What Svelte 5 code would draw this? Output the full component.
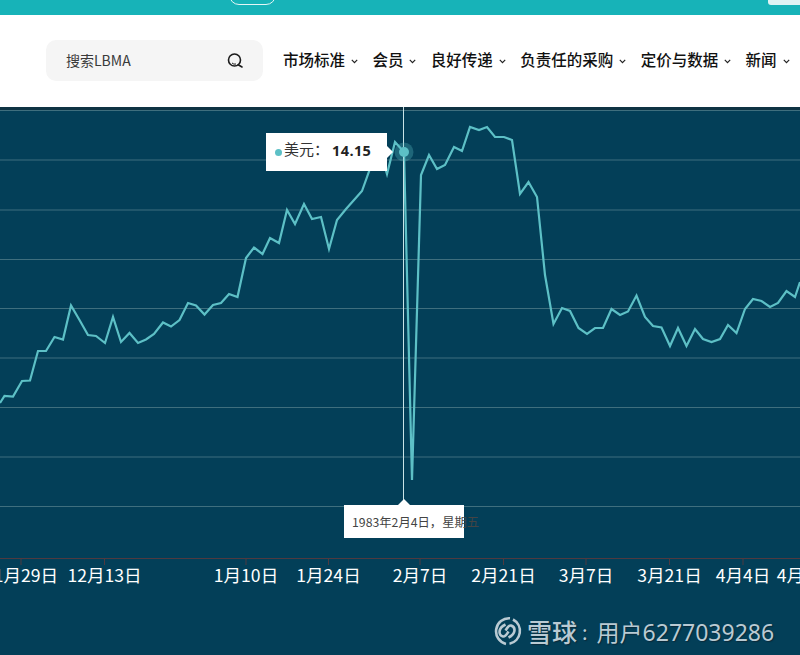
<script>
	// chart samples, read off the reference
	const points = [
		[0, 403], [4.5, 396], [13, 396.5], [22, 381], [30, 380.5], [38, 351], [46, 351], [54.5, 337], [63, 339.5],
		[71, 305.5], [79.5, 320], [88, 335], [96, 336], [105, 343], [113, 317], [121, 342], [129.5, 333], [138, 343],
		[146, 339.5], [154, 334], [163, 322.5], [171, 326.5], [179.5, 320], [188, 303], [196, 305.5], [204.5, 314.5],
		[213, 305], [221, 303], [229, 294], [237.5, 297], [246, 258], [254, 247.5], [262.5, 254], [270, 238],
		[279, 243], [287, 210], [295, 224], [304, 204], [312, 219], [321, 217], [329, 249], [337, 220], [346, 209],
		[354, 200], [362, 191], [371, 166], [379, 147], [387, 174], [395, 142], [404, 152], [412, 480], [421, 175],
		[429, 155], [437, 169], [445, 165], [454, 147], [462, 151], [470, 127], [479, 130], [487, 127], [495, 137],
		[504, 137], [512, 140], [520, 194], [528.5, 182], [537, 197], [545, 275], [553.5, 324], [562, 308], [570, 311],
		[578.5, 328], [587, 334], [595, 328], [603, 328], [611.5, 309], [620, 315], [628, 311.5], [636.5, 295.5],
		[645, 317], [653, 326], [661.5, 327.5], [670, 346], [678, 328], [686.5, 346], [695, 329], [703, 339],
		[711.5, 342], [720, 339], [728, 325], [736.5, 333], [745, 309], [753, 299], [761.5, 301], [770, 307],
		[778, 303], [786.5, 291], [795, 297], [800, 282]
	];
	const line = points.map((p) => p.join(',')).join(' ');
	const grid = [160, 210, 259.5, 308.5, 358, 407.5, 457, 506.5];
	const labels = [
		{ x: 21, text: '11月29日' },
		{ x: 104.5, text: '12月13日' },
		{ x: 246, text: '1月10日' },
		{ x: 328.5, text: '1月24日' },
		{ x: 420, text: '2月7日' },
		{ x: 503.5, text: '2月21日' },
		{ x: 586, text: '3月7日' },
		{ x: 669.5, text: '3月21日' },
		{ x: 743, text: '4月4日' },
		{ x: 809, text: '4月18日' }
	];
	const nav = ['市场标准', '会员', '良好传递', '负责任的采购', '定价与数据', '新闻'];
</script>

<div class="page">
	<div class="topbar">
		<span class="pill"></span>
		<span class="corner"></span>
	</div>

	<header>
		<div class="search">
			<span>搜索LBMA</span>
			<svg width="18" height="18" viewBox="0 0 18 18" fill="none" stroke="#1c1c1c" stroke-width="1.6">
				<circle cx="8.5" cy="8" r="6" />
				<path d="M6 11 A4 4 0 0 0 10 12" stroke-width="1" />
				<path d="M12.2 12.8 L16 15" stroke-linecap="round" />
			</svg>
		</div>
		<nav>
			{#each nav as item}
				<span class="item">
					{item}
					<svg width="7" height="5" viewBox="0 0 7 5" fill="none" stroke="#222" stroke-width="1.2">
						<path d="M0.8 0.8 L3.5 3.6 L6.2 0.8" />
					</svg>
				</span>
			{/each}
		</nav>
	</header>

	<section class="chart">
		<svg class="plot" width="800" height="548" viewBox="0 107 800 548">
			<line class="gridline" x1="0" x2="800" y1="110.5" y2="110.5" />
			{#each grid as y}
				<line class="gridline" x1="0" x2="800" y1={y} y2={y} />
			{/each}
			<line class="axis" x1="0" x2="800" y1="558.5" y2="558.5" />
			{#each labels as label}
				<line class="axis" x1={label.x} x2={label.x} y1="558" y2="565" />
				<text class="tick" x={label.x} y="581.5" text-anchor="middle">{label.text}</text>
			{/each}
			<polyline class="series" points={line} />
			<line class="cursor" x1="403.5" x2="403.5" y1="107" y2="500" />
			<circle class="halo" cx="404" cy="152" r="9.5" />
			<circle class="marker" cx="404" cy="152" r="5" />
		</svg>

		<div class="value-tip">
			<i></i><span>美元：</span><b>14.15</b>
		</div>
		<div class="date-tip"><span>1983年2月4日，星期五</span></div>

		<div class="watermark">
			<svg width="30" height="30" viewBox="0 0 30 30" fill="none" stroke="#b9cad3" stroke-width="2.6">
				<path d="M18 2.3 A13 13 0 0 0 14 27.9" />
				<path d="M21 3.5 A13 13 0 0 1 17.5 27.7" />
				<path d="M13.5 8.5 C6 12 6 19 11 20.5 C13.5 21 15 18 16.5 15.5" />
				<path d="M16.5 21.5 C24 18 24 11 19 9.5 C16.5 9 15 12 13.5 14.5" />
			</svg>
			<span class="brand">雪球</span><span class="colon">:</span><span class="user">用户6277039286</span>
		</div>
	</section>
</div>

<style>
	:global(body) {
		margin: 0;
	}

	.page {
		width: 800px;
		height: 655px;
		overflow: hidden;
		display: flex;
		flex-direction: column;
		font-family: "Noto Sans CJK SC", "Noto Sans", sans-serif;
	}

	.topbar {
		position: relative;
		height: 15px;
		flex: none;
		background: #17b3b8;
	}

	.pill {
		position: absolute;
		left: 229px;
		top: -15px;
		width: 47px;
		height: 20px;
		box-sizing: border-box;
		border: 1px solid #e4f6f6;
		border-radius: 10px;
	}

	.corner {
		position: absolute;
		right: 0;
		top: 0;
		width: 32px;
		height: 5px;
		background: #dff3f4;
		border-bottom-left-radius: 3px;
	}

	header {
		height: 92px;
		flex: none;
		box-sizing: border-box;
		padding: 0 0 1px 46px;
		display: flex;
		align-items: center;
		gap: 20px;
		background: #fff;
	}

	.search {
		width: 217px;
		height: 41px;
		flex: none;
		box-sizing: border-box;
		padding: 0 19px 0 20px;
		display: flex;
		align-items: center;
		justify-content: space-between;
		background: #f5f5f5;
		border-radius: 10px;
		font-size: 14px;
		color: #3a3a3a;
	}

	.search span {
		padding-bottom: 2px;
	}

	nav {
		display: flex;
		align-items: center;
		padding-bottom: 4px;
		white-space: nowrap;
	}

	.item {
		display: flex;
		align-items: center;
		gap: 6px;
		margin-right: 14.4px;
		font-size: 15.5px;
		font-weight: 500;
		color: #111;
	}

	.item svg {
		margin-top: 5px;
	}

	.chart {
		position: relative;
		flex: 1;
		background: #033f58;
		border-top: 3px solid #0e3343;
	}

	.plot {
		display: block;
		position: absolute;
		left: 0;
		top: -3px;
	}

	.gridline {
		stroke: #3f6f7e;
		stroke-width: 1;
	}

	.axis {
		stroke: #4f3a40;
		stroke-width: 1;
	}

	.tick {
		fill: #fff;
		font-size: 17.6px;
	}

	.series {
		fill: none;
		stroke: #5dc0c6;
		stroke-width: 2.2;
		stroke-linejoin: miter;
	}

	.cursor {
		stroke: #c9e3e6;
		stroke-width: 1;
	}

	.halo {
		fill: #5dc0c6;
		opacity: 0.3;
	}

	.marker {
		fill: #5dc0c6;
	}

	.value-tip {
		position: absolute;
		left: 266px;
		top: 23px;
		width: 121px;
		height: 38px;
		box-sizing: border-box;
		padding: 0 0 7px 9px;
		display: flex;
		align-items: center;
		background: #fff;
		color: #333;
		font-size: 15px;
	}

	.value-tip::after {
		content: '';
		position: absolute;
		left: 100%;
		top: 13px;
		border: 6px solid transparent;
		border-left-color: #fff;
	}

	.value-tip i {
		width: 7px;
		height: 7px;
		margin: 7px 2px 0 0;
		border-radius: 50%;
		background: #5dc0c6;
	}

	.value-tip span {
		margin-right: 3px;
	}

	.value-tip b {
		padding-top: 3px;
		font-family: "Open Sans", sans-serif;
		font-size: 14.5px;
		letter-spacing: 0.4px;
		color: #222;
	}

	.date-tip {
		position: absolute;
		left: 344px;
		top: 395px;
		width: 120px;
		height: 33px;
		box-sizing: border-box;
		padding-left: 8px;
		display: flex;
		align-items: center;
		white-space: nowrap;
		background: #fff;
		color: #444;
		font-size: 12.3px;
	}

	.date-tip::before {
		content: '';
		position: absolute;
		left: 54px;
		top: -12px;
		border: 6px solid transparent;
		border-bottom-color: #fff;
	}

	.watermark {
		position: absolute;
		left: 492px;
		top: 503px;
		display: flex;
		align-items: center;
		color: #b9cad3;
		text-shadow: 1px 1px 1px #0b2a3a;
		white-space: nowrap;
	}

	.brand {
		margin-left: 5px;
		font-size: 25px;
		font-weight: 500;
	}

	.colon {
		margin: 0 9px 0 5px;
		font-size: 20px;
	}

	.user {
		font-size: 23px;
		font-family: "Noto Sans", "Noto Sans CJK SC", sans-serif;
	}
</style>
